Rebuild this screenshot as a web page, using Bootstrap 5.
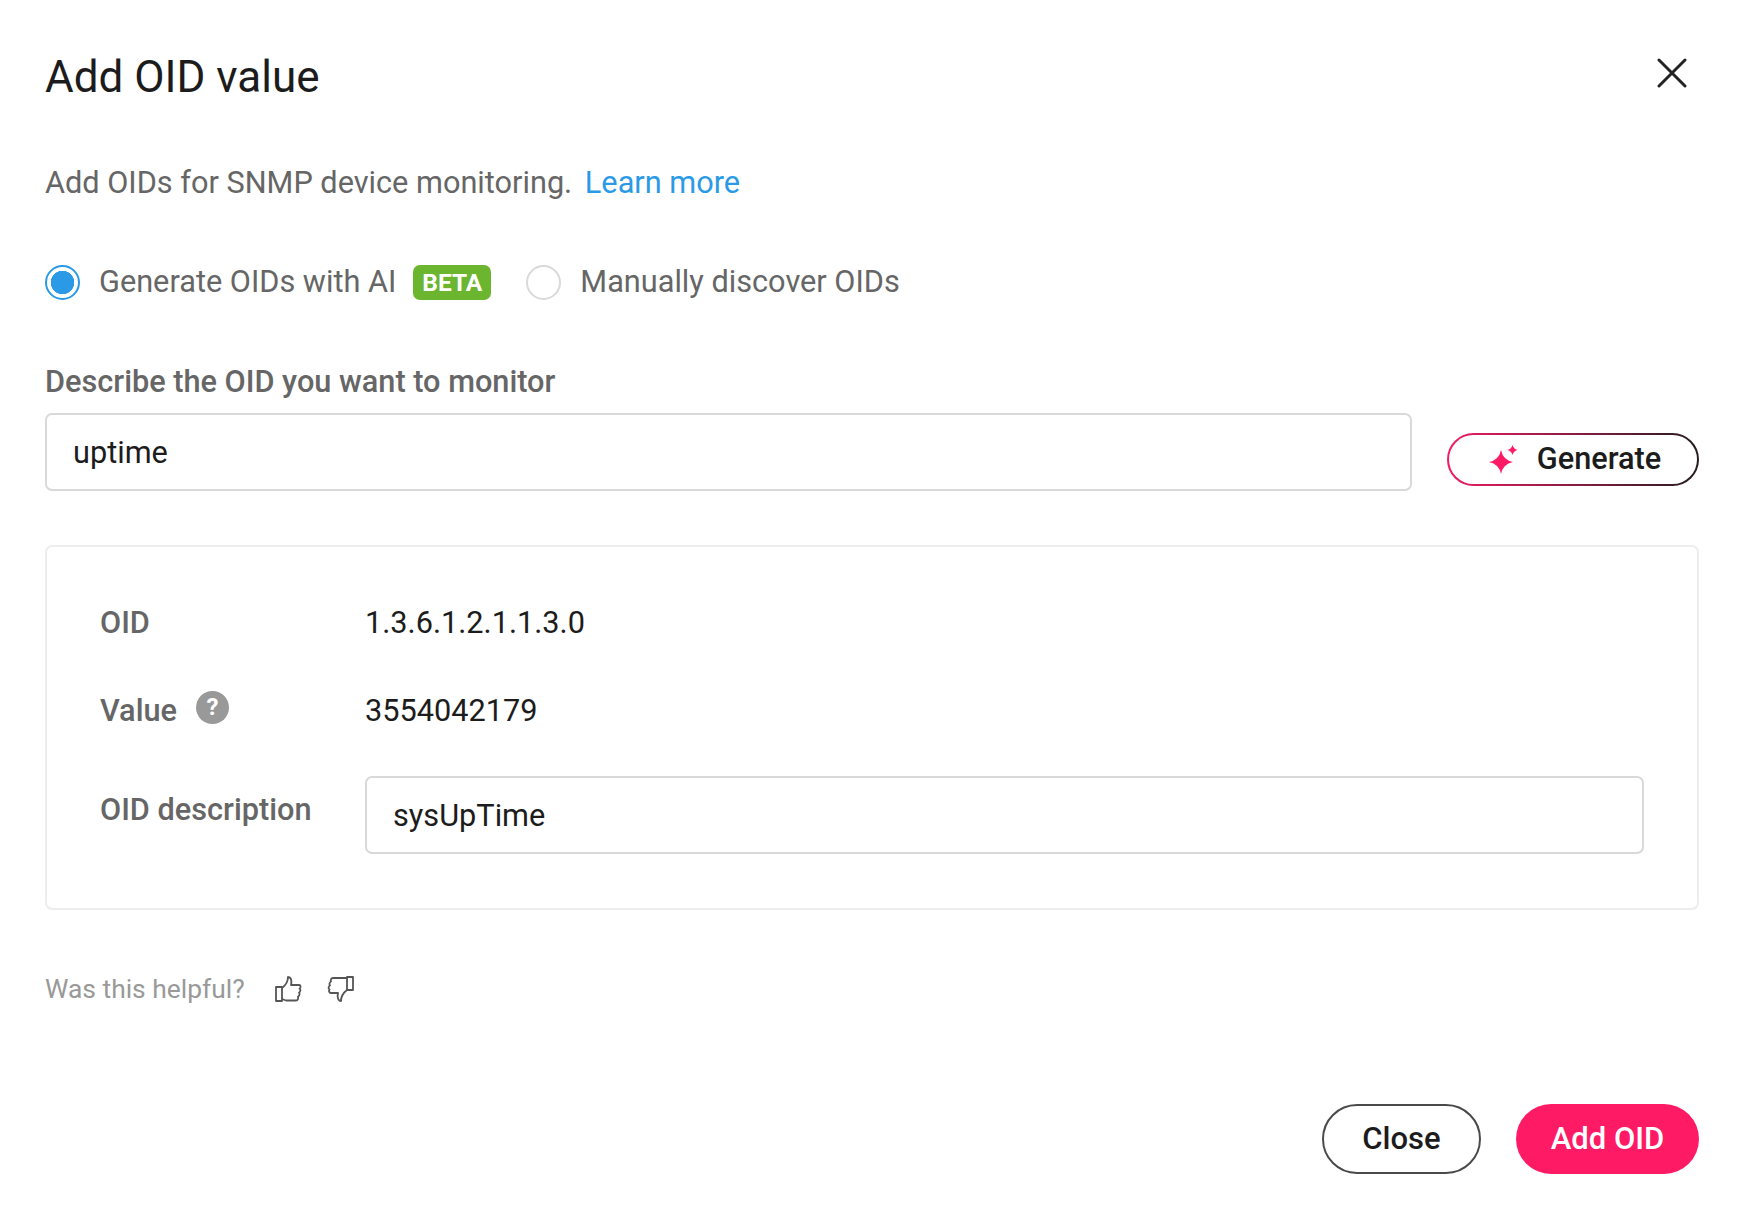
<!DOCTYPE html>
<html lang="en">
<head>
    <meta charset="UTF-8">
    <meta name="viewport" content="width=device-width, initial-scale=1">
    <title>Add OID value</title>
    <link href="https://cdn.jsdelivr.net/npm/bootstrap@5.3.3/dist/css/bootstrap.min.css" rel="stylesheet">
    <style>
        body { background: #fff; color: #1c1c1c; font-family: Roboto, "Liberation Sans", sans-serif; font-size: 30.7px; }
        .oid-modal { height: 1218px; padding: 0 45px 44px 45px; }
        .oid-head { height: 160px; padding-bottom: 11px; }
        .oid-title { font-size: 44px; font-weight: 400; margin: 4px 0 0; color: #1c1c1c; line-height: 1; }
        .oid-x { background: none; border: 0; padding: 0; width: 30px; height: 30px; margin: 0 12px 4px 0; }
        .oid-intro { color: #666; height: 64px; }
        .oid-intro a { color: #2b9ae6; text-decoration: none; margin-left: 5px; }
        .oid-radios { margin-top: 40px; height: 36px; color: #666; }
        .oid-radios .form-check-input { width: 35px; height: 35px; margin: 0; border: 2px solid #d9d9d9; background-image: none; box-shadow: none; }
        .oid-radios .form-check-input:checked { background-color: #fff; border-color: #2b9ae6; background-image: radial-gradient(circle, #2b9ae6 0 11.5px, transparent 12px); }
        .oid-radios label { margin-left: 19px; }
        .oid-beta { background: #6cb52f; color: #fff; font-size: 24.5px; font-weight: 700; padding: 3px 9px; border-radius: 7px; line-height: 29px; margin-left: 17px; }
        .oid-radios .oid-second { margin-left: 35px; }
        .oid-label { font-weight: 500; color: #666; }
        .oid-describe { margin-top: 64px; line-height: 36px; margin-bottom: 13px; }
        .oid-input { border: 2px solid #d9d9d9; border-radius: 7px; font-size: 30.7px; color: #1c1c1c; padding: 0 26px; height: 78px; box-shadow: none; }
        .oid-generate { height: 53px; width: 252px; margin-left: 35px; margin-top: 20px; border-radius: 27px; border: 2px solid transparent; padding: 0 0 0 4px; font-size: 30.7px; font-weight: 500; color: #1c1c1c; background: linear-gradient(#fff, #fff) padding-box, linear-gradient(90deg, #f01c65, #241c20) border-box; flex-shrink: 0; }
        .oid-panel { margin-top: 54px; height: 365px; border: 2px solid #ededed; border-radius: 7px; padding: 58px 53px 0 53px; display: grid; grid-template-columns: 265px 1fr; grid-template-rows: 36px 36px 78px; row-gap: 52px; }
        .oid-panel .oid-input { margin-top: -5px; }
        .oid-panel > div { line-height: 36px; }
        .oid-panel .oid-label-low { margin-top: 11px; }
        .oid-help { display: inline-block; width: 33px; height: 33px; border-radius: 50%; background: #999; color: #fff; font-size: 24px; font-weight: 700; line-height: 33px; text-align: center; margin-left: 19px; position: relative; top: -6px; }
        .oid-feedback { margin-top: 63px; color: #999; font-size: 26.4px; line-height: 32px; }
        .oid-thumb-up { margin-left: 29px; }
        .oid-thumb-down { margin-left: 25px; }
        .oid-foot { margin-top: auto; }
        .oid-btn { height: 70px; border-radius: 35px; font-size: 31px; font-weight: 500; padding: 0; }
        .oid-close { width: 159px; border: 2px solid #4a4a4a; background: #fff; color: #1c1c1c; }
        .oid-add { width: 183px; margin-left: 35px; border: 0; background: #ff1a66; color: #fff; }
    </style>
</head>
<body>
    <div class="oid-modal d-flex flex-column">
        <div class="oid-head d-flex justify-content-between align-items-center">
            <h1 class="oid-title">Add OID value</h1>
            <button class="oid-x d-flex" type="button" aria-label="Close">
                <svg width="30" height="30" viewBox="0 0 30 30"><path d="M2 2 28 28M28 2 2 28" stroke="#222" stroke-width="3" stroke-linecap="round" fill="none"/></svg>
            </button>
        </div>

        <div class="oid-intro">Add OIDs for SNMP device monitoring. <a href="#">Learn more</a></div>

        <div class="oid-radios d-flex align-items-center">
            <input class="form-check-input" type="radio" name="mode" id="modeAi" checked>
            <label for="modeAi">Generate OIDs with AI</label>
            <span class="oid-beta">BETA</span>
            <input class="form-check-input oid-second" type="radio" name="mode" id="modeManual">
            <label for="modeManual">Manually discover OIDs</label>
        </div>

        <div class="oid-label oid-describe">Describe the OID you want to monitor</div>
        <div class="d-flex align-items-start">
            <input class="form-control oid-input" type="text" value="uptime">
            <button class="oid-generate d-flex align-items-center justify-content-center gap-3" type="button">
                <svg width="32" height="30" viewBox="0 0 32 30"><path d="M12 5Q14 15 24 17 14 19 12 29 10 19 0 17 10 15 12 5Z" fill="#ff1a66"/><path d="M23.500 0Q24.500 4 28.500 5 24.500 6 23.500 10 22.500 6 18.500 5 22.500 4 23.500 0Z" fill="#ff1a66"/></svg>
                <span>Generate</span>
            </button>
        </div>

        <div class="oid-panel">
            <div class="oid-label">OID</div>
            <div>1.3.6.1.2.1.1.3.0</div>
            <div class="oid-label">Value<span class="oid-help">?</span></div>
            <div>3554042179</div>
            <div class="oid-label oid-label-low">OID description</div>
            <input class="form-control oid-input" type="text" value="sysUpTime">
        </div>

        <div class="oid-feedback d-flex align-items-center">
            <span>Was this helpful?</span>
            <svg class="oid-thumb-up" width="28" height="28" viewBox="0 0 28 28" fill="none" stroke="#555" stroke-width="1.800" stroke-linejoin="round"><path d="M2 12H8V26H2Z"/><path d="M8 13C12 10 14 7 14 2 17 2 18 5 17 10H25C27 10 27 13 25.500 13.500 27 14.500 26.500 17 25 17.500 26 18.500 25.500 21 24 21.500 24.500 23 24 25.500 22 25.500H12L8 24"/></svg>
            <svg class="oid-thumb-down" width="28" height="28" viewBox="0 0 28 28" fill="none" stroke="#555" stroke-width="1.800" stroke-linejoin="round"><path d="M20 2H26V15H20Z"/><path d="M20 3H6C4 3 3.500 5 4 6.500 2.500 7 2 9.500 3 10.500 1.500 11 1 13.500 2.500 14.500 1.500 15.500 2 18 4 18H11C10 22 11 26 14 26 14 21 16 18 20 15"/></svg>
        </div>

        <div class="oid-foot d-flex justify-content-end">
            <button class="oid-btn oid-close" type="button">Close</button>
            <button class="oid-btn oid-add" type="button">Add OID</button>
        </div>
    </div>

    <script src="https://cdn.jsdelivr.net/npm/bootstrap@5.3.3/dist/js/bootstrap.bundle.min.js"></script>
</body>
</html>
